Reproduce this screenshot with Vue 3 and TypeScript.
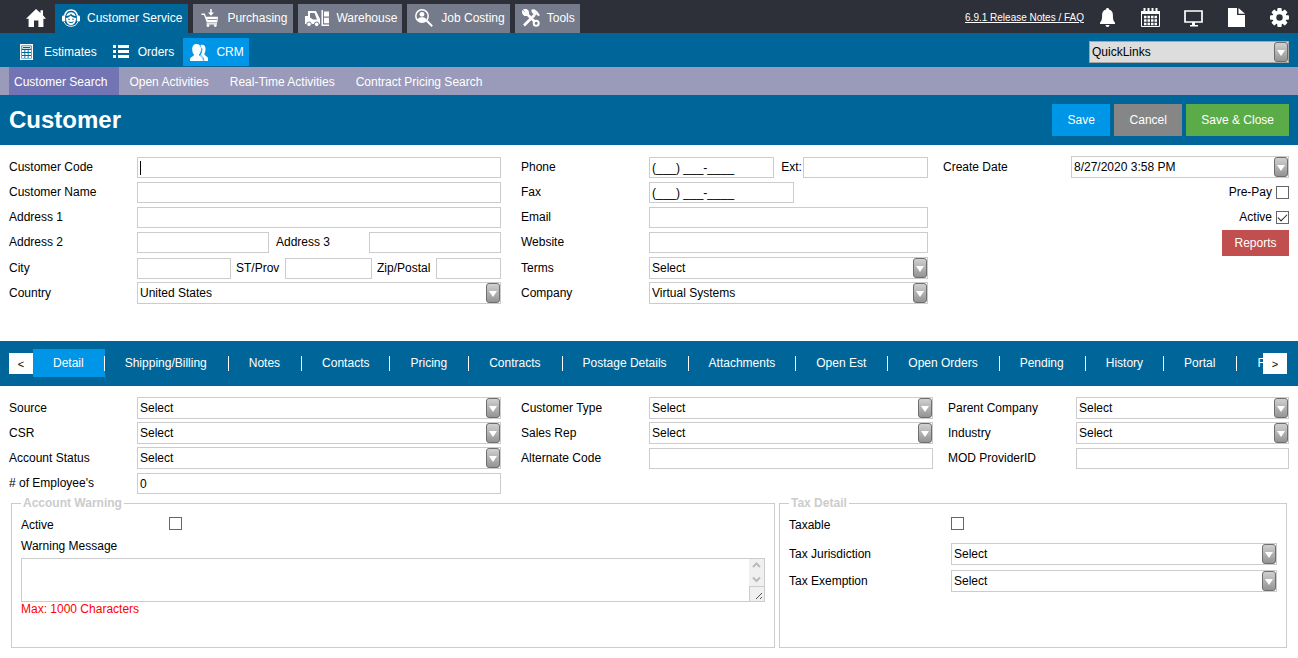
<script setup lang="ts">
import { ref } from 'vue'

interface Module {
  name: string
  icon: string
  width: number
}

const modules: Module[] = [
  { name: 'Customer Service', icon: 'agent', width: 18 },
  { name: 'Purchasing', icon: 'cart', width: 20 },
  { name: 'Warehouse', icon: 'forklift', width: 24 },
  { name: 'Job Costing', icon: 'search', width: 20 },
  { name: 'Tools', icon: 'tools', width: 18 },
]
const activeModule = ref('Customer Service')

const pages = ['Customer Search', 'Open Activities', 'Real-Time Activities', 'Contract Pricing Search']
const activePage = ref('Customer Search')

const tabs = [
  'Detail', 'Shipping/Billing', 'Notes', 'Contacts', 'Pricing', 'Contracts', 'Postage Details',
  'Attachments', 'Open Est', 'Open Orders', 'Pending', 'History', 'Portal', 'Files',
]
const activeTab = ref('Detail')

const code = ref('')
const phone = ref('(___) ___-____')
const fax = ref('(___) ___-____')
const created = ref('8/27/2020 3:58 PM')
const employees = ref('0')
const prePay = ref(false)
const active = ref(true)
const warningActive = ref(false)
const taxable = ref(false)
const warning = ref('')
</script>

<template>
  <div class="page">
    <header>
      <div class="topbar">
        <a class="home" href="#" aria-label="Home">
          <svg width="20" height="18" viewBox="0 0 20 18"><path fill="currentColor" d="M10 0l4.500 4V1.200H17v5l3 3.500h-2.600V18h-5v-6.500H8V18H2.600V9.700H0z" /></svg>
        </a>
        <nav class="modules" aria-label="Modules">
          <a
            v-for="m in modules"
            :key="m.name"
            href="#"
            :class="{ on: m.name === activeModule }"
            @click.prevent="activeModule = m.name"
          >
            <svg :width="m.width" height="18" :viewBox="`0 0 ${m.width} 18`" aria-hidden="true">
              <g v-if="m.icon === 'agent'">
                <path d="M2.500 6.800C3.500 3 6 1 9 1s5.500 2 6.500 5.800" fill="none" stroke="#fff" stroke-width="1.500" />
                <rect x="0" y="6.500" width="3.200" height="6" rx="1.300" fill="#fff" />
                <rect x="14.800" y="6.500" width="3.200" height="6" rx="1.300" fill="#fff" />
                <path d="M4 9c2-.2 3.500-1 4.500-2.500C9.800 8 12 8.800 14 9c0 4.500-2 7-5 7s-5-2.500-5-7z" fill="#fff" />
                <path d="M4.300 7C5 4.300 7 3.300 9 3.300s4 1 4.700 3.700c-1.700 0-3.400-.8-4.700-2.200C7.800 6.200 6 7 4.300 7z" fill="#fff" />
                <path d="M2 12.500c1 3 3.500 4.800 7 4.800s6-1.800 7-4.800" fill="none" stroke="#fff" />
                <circle cx="7" cy="10.300" r=".8" fill="#069" />
                <circle cx="11" cy="10.300" r=".8" fill="#069" />
                <path d="M6.500 12.800q2.500 2 5 0" fill="none" stroke="#069" />
              </g>
              <g v-else-if="m.icon === 'cart'" fill="#fff">
                <path d="M10.200 0h1.600v3.500h2.200l-3 3.200-3-3.200h2.200z" />
                <path d="M1.500 4.500h3.300l1.200 3.200h12L17.300 13.500H6.800L4 6H1.500z" />
                <path d="M6.500 14.200H17v1.300H6.500z" />
                <circle cx="8" cy="16.600" r="1.400" />
                <circle cx="15.300" cy="16.600" r="1.400" />
                <path d="M7.500 10.500h9.500" stroke="#757b8b" stroke-width=".8" />
              </g>
              <g v-else-if="m.icon === 'forklift'" fill="#fff">
                <path d="M0 7h3V2h8l4 8v5H0zM5 4v4.500l3 2h4L9.500 4z" fill-rule="evenodd" />
                <circle cx="4" cy="15.300" r="2.300" stroke="#757b8b" />
                <circle cx="11.700" cy="15.300" r="2.300" stroke="#757b8b" />
                <path d="M16.500 1H18v14.500h6V17h-7.500zM19 2.500h5v5h-5zM19 8.700h5v5.500h-5z" />
              </g>
              <g v-else-if="m.icon === 'search'">
                <circle cx="8" cy="7" r="6.200" fill="none" stroke="#fff" stroke-width="1.500" />
                <circle cx="8" cy="5.300" r="2.400" fill="#fff" />
                <path d="M3.700 10.600C4 8.500 6 8.200 8 8.200s4 .3 4.300 2.400C11 12.500 9.500 13 8 13s-3-.5-4.300-2.400z" fill="#fff" />
                <path d="M12.500 11.500l5.700 5.700" stroke="#fff" stroke-width="2" />
              </g>
              <g v-else fill="none" stroke="#fff">
                <path d="M5.500 5.500l7.500 7.500" stroke-width="2.600" />
                <path d="M2 .8l2.500 2.700-1 1-2.700-2.300A3.300 3.300 0 005.500 6 3.300 3.300 0 005 1 3.500 3.500 0 002 .8z" stroke-width="1.300" fill="#fff" />
                <circle cx="14.200" cy="14.200" r="2.500" stroke-width="2" />
                <path d="M2 16.500L12.500 6" stroke-width="2.600" />
                <path d="M9.500 1.800c3-1 4.500 0 7.500 5M10 2l4 4" stroke-width="2.200" />
              </g>
            </svg>
            <span>{{ m.name }}</span>
          </a>
        </nav>
        <div class="utilities">
          <a class="release" href="#">6.9.1 Release Notes / FAQ</a>
          <button type="button" aria-label="Notifications">
            <svg width="19" height="19" viewBox="0 0 19 19" fill="currentColor"><path d="M9.500 0c1 0 1.500.7 1.500 1.600 2.700.6 3.900 2.700 3.900 5.400 0 4.500.6 6 2.100 7.500V16H2v-1.500C3.500 13 4.100 11.500 4.100 7c0-2.700 1.200-4.800 3.900-5.400C8 .7 8.500 0 9.500 0zM7.500 17h4c0 1.200-.9 2-2 2s-2-.8-2-2z" /></svg>
          </button>
          <button type="button" aria-label="Calendar">
            <svg width="19" height="19" viewBox="0 0 19 19"><path d="M.5 3.500h18v15H.5z" fill="none" stroke="#fff" /><path d="M0 3h19v3H0z" fill="#fff" /><path d="M3.500 0v3M7.500 0v3M11.500 0v3M15.500 0v3" stroke="#fff" stroke-width="2" /><path d="M3 9h14M3 12.500h14M3 16h14" stroke="#fff" stroke-width="2.500" stroke-dasharray="2.500 1" /></svg>
          </button>
          <button type="button" aria-label="Display">
            <svg width="19" height="19" viewBox="0 0 19 19"><path d="M1 3h17v11H1z" fill="none" stroke="#fff" stroke-width="1.700" /><path d="M8 14h3v3h3v1.500H6V17h2z" fill="#fff" /></svg>
          </button>
          <button type="button" aria-label="Documents">
            <svg width="19" height="19" viewBox="0 0 19 19" fill="currentColor"><path d="M1 0h9v7h8v12H1zM11.500 0L18 5.800h-6.500z" /></svg>
          </button>
          <button type="button" aria-label="Settings">
            <svg width="19" height="19" viewBox="0 0 19 19" fill="currentColor">
              <circle cx="9.500" cy="9.500" r="7" />
              <rect v-for="angle in [0, 45, 90, 135]" :key="angle" x="7.300" y="0" width="4.400" height="19" rx="1" :transform="`rotate(${angle} 9.500 9.500)`" />
              <circle cx="9.500" cy="9.500" r="3.200" fill="#2d3038" />
            </svg>
          </button>
        </div>
      </div>

      <div class="subbar">
        <nav class="areas" aria-label="Customer Service">
          <a href="#">
            <svg width="18" height="16" viewBox="0 0 18 16" aria-hidden="true"><path d="M3.700.7h11.600v14.600H3.700z" fill="none" stroke="#fff" stroke-width="1.400" /><path d="M5.500 2.500h8v2h-8z" fill="none" stroke="#fff" stroke-width=".8" /><path d="M5 6h2.400v2H5zM8.300 6h2.400v2H8.300zM11.600 6H14v2h-2.400zM5 9h2.400v2H5zM8.300 9h2.400v2H8.300zM11.600 9H14v2h-2.400zM5 12h2.400v2H5zM8.300 12h2.400v2H8.300zM11.600 12H14v2h-2.400z" fill="#fff" /></svg>
            Estimates
          </a>
          <a href="#">
            <svg width="17" height="16" viewBox="0 0 17 16" aria-hidden="true" fill="#fff"><path d="M0 1h3v3H0zM0 6h3v3H0zM0 11h3v3H0zM5 1h11v3H5zM5 6h11v3H5zM5 11h11v3H5z" /></svg>
            Orders
          </a>
          <a href="#" class="on">
            <svg width="18" height="17" viewBox="0 0 18 17" aria-hidden="true" fill="#fff"><path d="M10.500 1c3.500-.8 5.500 1.200 5 5 0 2-1 3-1.200 4.200.4 1.600 3.200 2 3.700 3.800v3h-4.500c0-2.800-1-3.600-3.500-4.800 0-1 1.600-2.200 1.600-5 0-3-.4-4.600-1.100-6.200z" /><path d="M6.500 0C9.500 0 11 2 11 5s-1 4.500-2 5.500c0 2.300 3.700 2 3.900 5V17H0v-1.500c.2-3 4-2.700 4-5C3 9.500 2.200 8 2.200 5s1.300-5 4.300-5z" /><path d="M11.800 4c.3 3.500-.5 5-1.500 6.500.2 1.500 3.500 1.800 3.500 6" fill="none" stroke="#0096e8" stroke-width=".7" /></svg>
            CRM
          </a>
        </nav>
        <span class="drop quick">
          <select aria-label="QuickLinks"><option>QuickLinks</option></select>
        </span>
      </div>

      <nav class="pages" aria-label="CRM">
        <a v-for="p in pages" :key="p" href="#" :class="{ on: p === activePage }" @click.prevent="activePage = p">{{ p }}</a>
      </nav>

      <div class="title">
        <h1>Customer</h1>
        <div class="actions">
          <button type="button" class="save">Save</button>
          <button type="button" class="cancel">Cancel</button>
          <button type="button" class="close">Save &amp; Close</button>
        </div>
      </div>
    </header>

    <main>
      <form class="columns general" @submit.prevent>
        <div class="fields">
          <label for="code">Customer Code</label>
          <div class="cell entry"><input id="code" v-model="code" type="text"><i v-if="!code" class="caret"></i></div>
          <label for="name">Customer Name</label>
          <div class="cell"><input id="name" type="text"></div>
          <label for="address1">Address 1</label>
          <div class="cell"><input id="address1" type="text"></div>
          <label for="address2">Address 2</label>
          <div class="cell address">
            <input id="address2" type="text"><label for="address3">Address 3</label><input id="address3" type="text">
          </div>
          <label for="city">City</label>
          <div class="cell city">
            <input id="city" type="text"><label for="state">ST/Prov</label><input id="state" type="text"><label for="zip">Zip/Postal</label><input id="zip" type="text">
          </div>
          <label for="country">Country</label>
          <span class="drop"><select id="country"><option>United States</option></select></span>
        </div>

        <div class="fields">
          <label for="phone">Phone</label>
          <div class="cell phone">
            <input id="phone" v-model="phone" type="tel"><label for="ext">Ext:</label><input id="ext" type="text">
          </div>
          <label for="fax">Fax</label>
          <div class="cell fax"><input id="fax" v-model="fax" type="tel"></div>
          <label for="email">Email</label>
          <div class="cell"><input id="email" type="email"></div>
          <label for="website">Website</label>
          <div class="cell"><input id="website" type="url"></div>
          <label for="terms">Terms</label>
          <span class="drop"><select id="terms"><option>Select</option></select></span>
          <label for="company">Company</label>
          <span class="drop"><select id="company"><option>Virtual Systems</option></select></span>
        </div>

        <div class="fields">
          <label for="created">Create Date</label>
          <span class="drop"><select id="created"><option>{{ created }}</option></select></span>
          <label class="flag" for="prepay">Pre-Pay <input id="prepay" v-model="prePay" type="checkbox"></label>
          <label class="flag" for="active">Active <input id="active" v-model="active" type="checkbox"></label>
          <button type="button" class="reports">Reports</button>
        </div>
      </form>

      <div class="tabbar">
        <button type="button" class="step" aria-label="Previous tabs">&lt;</button>
        <div class="tabs" role="tablist">
          <button
            v-for="t in tabs"
            :key="t"
            type="button"
            role="tab"
            :aria-selected="t === activeTab"
            :class="{ on: t === activeTab }"
            @click="activeTab = t"
          >{{ t }}</button>
        </div>
        <button type="button" class="step" aria-label="Next tabs">&gt;</button>
      </div>

      <form class="columns detail" @submit.prevent>
        <div class="fields">
          <label for="source">Source</label>
          <span class="drop"><select id="source"><option>Select</option></select></span>
          <label for="csr">CSR</label>
          <span class="drop"><select id="csr"><option>Select</option></select></span>
          <label for="status">Account Status</label>
          <span class="drop"><select id="status"><option>Select</option></select></span>
          <label for="employees"># of Employee's</label>
          <div class="cell"><input id="employees" v-model="employees" type="text"></div>
        </div>
        <div class="fields">
          <label for="type">Customer Type</label>
          <span class="drop"><select id="type"><option>Select</option></select></span>
          <label for="rep">Sales Rep</label>
          <span class="drop"><select id="rep"><option>Select</option></select></span>
          <label for="alternate">Alternate Code</label>
          <div class="cell"><input id="alternate" type="text"></div>
        </div>
        <div class="fields">
          <label for="parent">Parent Company</label>
          <span class="drop"><select id="parent"><option>Select</option></select></span>
          <label for="industry">Industry</label>
          <span class="drop"><select id="industry"><option>Select</option></select></span>
          <label for="provider">MOD ProviderID</label>
          <div class="cell"><input id="provider" type="text"></div>
        </div>
      </form>

      <div class="groups">
        <fieldset class="account">
          <legend>Account Warning</legend>
          <div class="line">
            <label for="warning-active">Active</label>
            <input id="warning-active" v-model="warningActive" type="checkbox">
          </div>
          <label class="message" for="warning">Warning Message</label>
          <div class="memo">
            <textarea id="warning" v-model="warning" maxlength="1000"></textarea>
            <svg class="scroll" width="15" height="42" viewBox="0 0 15 42" aria-hidden="true">
              <path d="M0 0h15v42H0z" fill="#f0f0f0" />
              <path d="M4 8l3.500-3.500L11 8M4 18.500L7.500 22l3.500-3.500" fill="none" stroke="#bbb" stroke-width="2" />
              <path d="M0 27.500h15M.5 27v15" fill="none" stroke="#ccc" />
              <path d="M7 40l6-6M11 40l2-2" stroke="#555" />
            </svg>
          </div>
          <p class="limit">Max: 1000 Characters</p>
        </fieldset>
        <fieldset class="tax">
          <legend>Tax Detail</legend>
          <div class="line">
            <label for="taxable">Taxable</label>
            <input id="taxable" v-model="taxable" type="checkbox">
          </div>
          <div class="line">
            <label for="jurisdiction">Tax Jurisdiction</label>
            <span class="drop"><select id="jurisdiction"><option>Select</option></select></span>
          </div>
          <div class="line">
            <label for="exemption">Tax Exemption</label>
            <span class="drop"><select id="exemption"><option>Select</option></select></span>
          </div>
        </fieldset>
      </div>
    </main>
  </div>
</template>

<style>
body {
  margin: 0;
  background: #fff;
}
</style>

<style scoped>
.page,
.page *,
.page *::before,
.page *::after {
  box-sizing: border-box;
}
.page {
  font: 12px/22px "Liberation Sans", Arial, sans-serif;
  color: #000;
}
button,
input,
select,
textarea {
  margin: 0;
  font: inherit;
  color: inherit;
  border-radius: 0;
}
button {
  border: 0;
  cursor: pointer;
}
a {
  color: #fff;
  text-decoration: none;
}
svg {
  display: block;
  flex: none;
}

.topbar {
  display: flex;
  min-height: 33px;
  padding: 0 9px;
  background: #2d3038;
}
.home {
  padding: 9px 9px 0 17px;
}
.modules {
  display: flex;
  gap: 5px;
  padding-top: 4px;
}
.modules a {
  display: flex;
  align-items: center;
  gap: 7px;
  padding: 0 5px 2px 7px;
  background: #757b8b;
  white-space: nowrap;
}
.modules a:nth-child(-n + 2) {
  padding-right: 6px;
}
.modules a.on {
  background: #069;
}
.utilities {
  display: flex;
  align-items: center;
  gap: 24px;
  margin-left: auto;
  padding-top: 2px;
}
.utilities button {
  padding: 0;
  background: none;
  color: #fff;
}
.release {
  margin-right: -10px;
  font-size: 10px;
  text-decoration: underline;
  white-space: nowrap;
}

.subbar {
  display: flex;
  justify-content: space-between;
  align-items: flex-end;
  min-height: 34px;
  padding: 0 9px;
  background: #069;
}
.areas {
  display: flex;
  gap: 3px;
  padding: 0 0 1px 1px;
}
.areas a {
  display: flex;
  align-items: center;
  gap: 8px;
  height: 28px;
  padding: 0 5px 0 7px;
}
.areas a:not(.on) {
  padding-right: 6px;
}
.areas a:first-child {
  gap: 9px;
}
.areas a.on {
  background: #0096e8;
}
.quick {
  flex: 0 0 200px;
  margin-bottom: 4px;
}

.pages {
  display: flex;
  padding: 0 9px;
  background: #9a9aba;
  line-height: 26px;
}
.pages a {
  padding: 2px 11px 0 10px;
}
.pages a:first-child {
  padding: 2px 12px 0 5px;
}
.pages a.on {
  background: #7374b4;
}

.title {
  display: flex;
  justify-content: space-between;
  align-items: center;
  min-height: 50px;
  padding: 0 9px;
  background: #069;
  color: #fff;
}
h1 {
  margin: 0;
  font-size: 24px;
  line-height: 32px;
}
.actions {
  display: flex;
  gap: 4px;
}
.actions button {
  min-width: 58px;
  height: 32px;
  padding: 0 15px;
}
.save {
  background: #0096e8;
}
.actions .cancel {
  min-width: 68px;
  background: #868686;
}
.close {
  background: #5bac49;
}

.columns {
  display: grid;
  padding: 0 9px;
}
.general {
  grid-template-columns: 512fr 422fr 346fr;
  margin-top: 11px;
}
.detail {
  grid-template-columns: 512fr 427fr 341fr;
  margin-top: 11px;
}
.fields {
  display: grid;
  grid-template-columns: 128px minmax(0, 1fr);
  grid-auto-rows: 22px;
  align-content: start;
  row-gap: 3px;
}
.general .fields {
  grid-template-rows: 22px 22px 22px 23px 22px 22px;
}
.fields:nth-child(1) {
  padding-right: 20px;
}
.fields:nth-child(2) {
  padding-right: 15px;
}
label {
  white-space: nowrap;
}
.cell {
  display: flex;
  padding-top: 1px;
}
.cell input {
  flex: 1 1 0;
  min-width: 0;
  height: 21px;
  padding: 0 2px;
  border: 1px solid #ccc;
  background: #fff;
  outline: none;
}
.cell label {
  margin-top: -1px;
}
.entry {
  position: relative;
}
.caret {
  position: absolute;
  top: 5px;
  left: 3px;
  width: 1px;
  height: 14px;
  background: #000;
}
.address label {
  flex: 0 0 100px;
  padding-left: 7px;
}
.city label {
  flex: 0 0 54px;
  padding-left: 5px;
}
.city label:nth-of-type(2) {
  flex-basis: 64px;
}
.city input:nth-of-type(1) {
  flex-grow: 88;
}
.city input:nth-of-type(2) {
  flex-grow: 81;
}
.city input:nth-of-type(3) {
  flex-grow: 59;
}
.phone label {
  padding: 0 1px 0 7px;
}
.fax {
  width: 52%;
}

.drop {
  position: relative;
  display: block;
  height: 22px;
}
.drop select {
  display: block;
  width: 100%;
  height: 22px;
  padding: 0 18px 0 2px;
  border: 1px solid #ccc;
  background: #fff;
  appearance: none;
  line-height: 20px;
  outline: none;
}
.drop::before {
  content: "";
  position: absolute;
  top: 1px;
  right: 1px;
  width: 14px;
  height: 20px;
  border: 1px solid #6e6e6e;
  border-radius: 3px;
  background: linear-gradient(#d0d0d0, #949494);
  pointer-events: none;
}
.drop::after {
  content: "";
  position: absolute;
  top: 9px;
  right: 4px;
  border: 4px solid transparent;
  border-top: 6px solid #fff;
  border-bottom: 0;
  pointer-events: none;
}
.quick select {
  border-color: #a5a5a5;
  background: #ddd;
}

input[type="checkbox"] {
  flex: none;
  width: 13px;
  height: 13px;
  border: 1px solid #666;
  background: #fff;
  appearance: none;
}
input[type="checkbox"]:checked::after {
  content: "";
  display: block;
  width: 9px;
  height: 5px;
  margin: 2px 0 0 1px;
  border: solid #222;
  border-width: 0 0 1px 1px;
  transform: rotate(-45deg);
}
.flag {
  grid-column: 1 / -1;
  display: flex;
  justify-content: flex-end;
  align-items: center;
  gap: 4px;
}
.reports {
  grid-column: 1 / -1;
  justify-self: end;
  min-width: 67px;
  height: 26px;
  margin-top: -1px;
  padding: 0 12px;
  background: #c14f50;
  color: #fff;
}

.tabbar {
  display: flex;
  min-height: 45px;
  margin-top: 37px;
  padding: 8px 11px 9px 9px;
  background: #069;
}
.step {
  flex: none;
  width: 24px;
  height: 21px;
  margin-top: 4px;
  padding: 0;
  background: #fff;
  font-size: 11px;
  line-height: 20px;
}
.tabs {
  flex: 1 1 0;
  display: flex;
  min-width: 0;
  overflow: hidden;
  color: #fff;
}
.tabs button {
  flex: none;
  display: flex;
  align-items: center;
  height: 28px;
  padding: 0 0 0 20px;
  background: none;
}
.tabs button::after {
  content: "";
  width: 1px;
  height: 15px;
  margin-left: 21px;
  background: #fff;
}
.tabs button:first-child::after,
.tabs button:nth-child(4n)::after {
  margin-left: 20px;
}
.tabs button.on {
  background: #0096e8;
}

.groups {
  display: grid;
  grid-template-columns: 764fr 508fr;
  gap: 4px;
  padding: 2px 11px 10px;
}
fieldset {
  min-width: 0;
  margin: 0;
  padding: 4px 9px 31px;
  border: 1px solid #ccc;
}
legend {
  padding: 0 2px;
  color: #ccc;
  font-weight: bold;
  line-height: 14px;
}
.line {
  display: flex;
}
.line label {
  flex: 0 0 148px;
}
.tax .line label {
  flex-basis: 162px;
}
.line input {
  margin-top: 3px;
}
.line .drop {
  flex: 1;
}
.line + .line {
  margin-top: 5px;
}
.line:nth-of-type(2) {
  margin-top: 7px;
}
.message {
  display: block;
  line-height: 20px;
}
.memo {
  position: relative;
  margin-top: 2px;
}
.memo textarea {
  display: block;
  width: 100%;
  height: 44px;
  padding: 2px 18px 2px 2px;
  border: 1px solid #ccc;
  outline: none;
  overflow: hidden;
  resize: none;
  line-height: 14px;
}
.scroll {
  position: absolute;
  top: 1px;
  right: 1px;
}
.limit {
  margin: 0;
  color: #f00;
  line-height: 14px;
}
</style>
